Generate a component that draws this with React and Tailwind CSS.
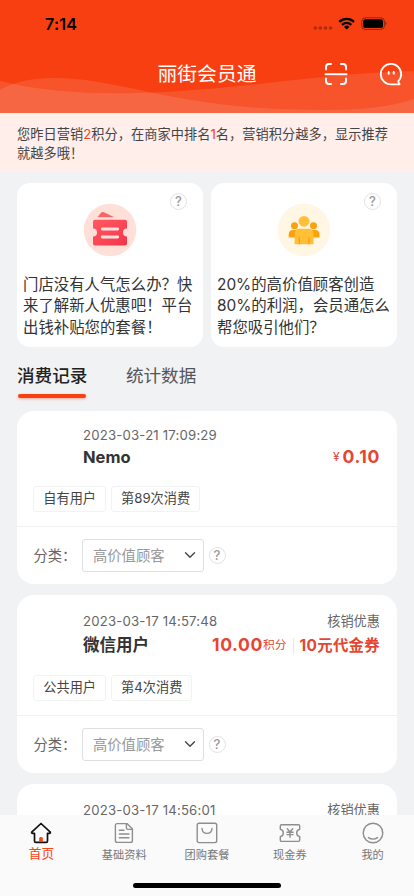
import { ChevronDown } from "lucide-react";

const promos = [
  {
    id: "newcomer",
    lines: ["门店没有人气怎么办？快", "来了解新人优惠吧！平台", "出钱补贴您的套餐！"],
    icon: <CouponIcon />,
  },
  {
    id: "member",
    lines: ["20%的高价值顾客创造", "80%的利润，会员通怎么", "帮您吸引他们？"],
    icon: <PeopleIcon />,
  },
];

const records = [
  { id: 1, time: "2023-03-21 17:09:29", name: "Nemo", price: "0.10", tags: ["自有用户", "第89次消费"] },
  {
    id: 2,
    time: "2023-03-17 14:57:48",
    name: "微信用户",
    points: "10.00",
    coupon: "10元代金券",
    tags: ["公共用户", "第4次消费"],
  },
];

const tabs = [
  { label: "首页", icon: <HomeIcon />, active: true },
  { label: "基础资料", icon: <DocIcon /> },
  { label: "团购套餐", icon: <BagIcon /> },
  { label: "现金券", icon: <TicketIcon /> },
  { label: "我的", icon: <FaceIcon /> },
];

function CouponIcon() {
  return (
    <svg width="54" height="54" viewBox="0 0 54 54">
      <defs>
        <linearGradient id="coupon" x1="0" y1="0" x2="1" y2="1">
          <stop offset="0" stopColor="#ff5a5f" />
          <stop offset="0.5" stopColor="#fd4757" />
          <stop offset="1" stopColor="#ee3548" />
        </linearGradient>
      </defs>
      <circle cx="27" cy="27" r="26.3" fill="#ffe0d9" />
      <path d="M14.5 14.2 18 9.8Q19.2 8.6 20.8 9.2L31.5 14.2Z" fill="#f4666a" />
      <path
        d="M12 16.8H42Q44 16.8 44 18.8V25.4A4 4 0 0 0 44 33.4V40.5Q44 42.5 42 42.5H12Q10 42.5 10 40.5V33.4A4 4 0 0 0 10 25.4V18.8Q10 16.8 12 16.8Z"
        fill="url(#coupon)"
      />
      <path d="M19.3 26H34.7M19.3 34H34.7" stroke="#ffe2dd" strokeWidth="2.8" strokeLinecap="round" />
    </svg>
  );
}

function PeopleIcon() {
  return (
    <svg width="54" height="54" viewBox="0 0 54 54">
      <circle cx="27" cy="27" r="26.3" fill="#fff6e3" />
      <g fill="#fba10d">
        <circle cx="17.5" cy="22.8" r="3.5" />
        <circle cx="36.5" cy="22.8" r="3.5" />
        <path d="M16 27H22V34.5H11.7V31.5Q11.7 27 16 27ZM38 27H32V34.5H42.5V31.5Q42.5 27 38 27Z" />
      </g>
      <circle cx="27" cy="18.3" r="5.4" fill="#ffc037" />
      <path d="M22.5 25.8H31.5Q36.5 25.8 36.5 31V41.3H17.6V31Q17.6 25.8 22.5 25.8Z" fill="#ffc037" />
      <path d="M22.3 34.5V41.3M32 34.5V41.3" stroke="#fba10d" strokeWidth="1.3" />
    </svg>
  );
}

function HomeIcon() {
  return (
    <svg width="22" height="22" viewBox="0 0 22 22" fill="none">
      <path
        d="M11 1.5 1.7 10.2Q1.4 11.3 2.6 11.3H4.5V19Q4.5 20.4 5.8 20.4H16.2Q17.5 20.4 17.5 19V11.3H19.4Q20.6 11.3 20.3 10.2Z"
        stroke="#111"
        strokeWidth="1.7"
        strokeLinejoin="round"
      />
      <path d="M9.2 20V16.4Q9.2 15 11 15T12.8 16.4V20Z" fill="#f94216" />
    </svg>
  );
}

function DocIcon() {
  return (
    <svg width="22" height="22" viewBox="0 0 22 22" fill="none" stroke="currentColor" strokeWidth="1.4" strokeLinejoin="round">
      <path d="M4.2 1.6H14L19.4 7V18.5Q19.4 20.4 17.5 20.4H4.2Q2.4 20.4 2.4 18.5V3.4Q2.4 1.6 4.2 1.6Z" />
      <path d="M13.4 1.8V6Q13.4 7.4 14.8 7.4H19.2M6.3 8.2H11M6.3 12H16M6.3 15.8H16" strokeLinecap="round" />
    </svg>
  );
}

function BagIcon() {
  return (
    <svg width="22" height="22" viewBox="0 0 22 22" fill="none" stroke="currentColor" strokeWidth="1.4" strokeLinecap="round">
      <rect x="1.2" y="1.3" width="19.5" height="19.3" rx="1.8" />
      <path d="M6 6.5C6.5 13 15.5 13 16 6.5" />
    </svg>
  );
}

function TicketIcon() {
  return (
    <svg width="22" height="22" viewBox="0 0 22 22" fill="none" stroke="currentColor" strokeWidth="1.4" strokeLinecap="round" strokeLinejoin="round">
      <path d="M2.5 2.7H19.5Q20.7 2.7 20.7 4V7.2Q17.7 8 17.7 11T20.7 14.8V18Q20.7 19.4 19.5 19.4H2.5Q1.3 19.4 1.3 18V14.8Q4.3 14 4.3 11T1.3 7.2V4Q1.3 2.7 2.5 2.7Z" />
      <path d="M8.3 6.8 11 10 13.7 6.8M7.9 10.2H14.1M7.9 12.6H14.1M11 10V15.2" />
    </svg>
  );
}

function FaceIcon() {
  return (
    <svg width="22" height="22" viewBox="0 0 22 22" fill="none" stroke="currentColor" strokeWidth="1.4" strokeLinecap="round">
      <circle cx="11" cy="11" r="9.8" />
      <path d="M6.4 15.6Q11 18.6 15.6 15.6" />
    </svg>
  );
}

function HelpMark() {
  return (
    <span className="flex size-[17px] shrink-0 items-center justify-center rounded-full border border-[#e2e2e2] text-[13px] leading-none font-medium text-[#999]">
      ?
    </span>
  );
}

function StatusBar() {
  return (
    <div className="flex h-[48px] items-start justify-between pt-[15px] pr-[27px] pl-[45px]">
      <span className="text-[16px] leading-[18px] font-semibold tracking-[0.2px] text-black">7:14</span>
      <svg width="74" height="18" viewBox="0 0 74 18">
        <g fill="#000" fillOpacity="0.3">
          <circle cx="2.3" cy="13" r="1.8" />
          <circle cx="7.3" cy="13" r="1.8" />
          <circle cx="12.5" cy="13" r="1.8" />
          <circle cx="17.6" cy="13" r="1.8" />
        </g>
        <g fill="none" stroke="#000" strokeWidth="2.3">
          <path d="M26.3 6.9A10.6 10.6 0 0 1 41 6.9" />
          <path d="M29 9.8A6.7 6.7 0 0 1 38.3 9.8" />
        </g>
        <path d="M33.7 14.6 31 11.9A3.9 3.9 0 0 1 36.4 11.9Z" />
        <rect x="48.8" y="2.8" width="22.6" height="11.6" rx="3.4" fill="none" stroke="#000" strokeOpacity="0.4" />
        <rect x="50.2" y="4.2" width="19.8" height="8.8" rx="2" />
        <path d="M72.4 6.6A2.4 2.4 0 0 1 72.4 10.6Z" fillOpacity="0.45" />
      </svg>
    </div>
  );
}

function Header() {
  return (
    <header className="relative h-[113px] shrink-0 bg-[#f73f11]">
      <svg className="absolute inset-0" width="414" height="113" viewBox="0 0 414 113">
        <path d="M0 81C45 92 90 94 135 93C245 90 310 74 414 71V113H0Z" fill="#fff" fillOpacity="0.11" />
        <path d="M0 90C30 72 80 77 125 87C190 101 240 110 320 110C365 110 390 107 414 99V113H0Z" fill="#fff" fillOpacity="0.11" />
      </svg>
      <div className="relative">
        <StatusBar />
        <div className="grid h-[52px] grid-cols-[1fr_auto_1fr] items-center">
          <span />
          <h1 className="text-[19.8px] leading-[26px] text-white">丽街会员通</h1>
          <div className="flex justify-end gap-[31px] pr-[11px] text-white">
            <svg width="24" height="24" viewBox="0 0 24 24" fill="none" stroke="currentColor" strokeWidth="2" strokeLinecap="round">
              <path d="M2 7.5V5Q2 2 5 2H7M17 2H19Q22 2 22 5V7.5M22 16.5V19Q22 22 19 22H17M7 22H5Q2 22 2 19V16.5M1.5 12.2H22.5" />
            </svg>
            <svg width="24" height="24" viewBox="0 0 24 24" fill="none" stroke="currentColor" strokeWidth="1.8" strokeLinejoin="round">
              <path d="M12 22.3A10.2 10.2 0 1 1 22.2 12Q22.2 16.2 19.3 19.2Q19.6 21 20.6 22.3Z" />
              <path d="M9.7 10V11.8M14.7 10V11.8" strokeWidth="2" strokeLinecap="round" />
            </svg>
          </div>
        </div>
      </div>
    </header>
  );
}

function Notice() {
  return (
    <div className="h-[59px] shrink-0 bg-[#ffeeea] px-[17px] pt-[11.5px] text-[13.2px] leading-[19px] tracking-[0.05px] whitespace-nowrap text-[#444]">
      <p>
        您昨日营销<span className="text-[#f94216]">2</span>积分，在商家中排名<span className="text-[#f94216]">1</span>
        名，营销积分越多，显示推荐
      </p>
      <p>就越多哦！</p>
    </div>
  );
}

function PromoCard({ promo }) {
  return (
    <div className="relative flex h-[164px] flex-1 flex-col rounded-[13px] bg-white pt-[20px] pl-[6px]">
      <div className="absolute top-[10.5px] right-[16px]">
        <HelpMark />
      </div>
      <div className="flex justify-center pr-[6px]">{promo.icon}</div>
      <div className="mt-[17.2px] text-[15.4px] leading-[21.4px] whitespace-nowrap text-[#333]">
        {promo.lines.map((line) => (
          <p key={line}>{line}</p>
        ))}
      </div>
    </div>
  );
}

function RecordCard({ record }) {
  return (
    <article className="shrink-0 rounded-[17px] bg-white">
      <div className={`pr-[17px] pl-[66px] ${record.coupon ? "h-[79.7px] pt-[17px]" : "h-[75px] pt-[15.5px]"}`}>
        <div className="flex h-[18px] items-center justify-between text-[13.2px] leading-[18px] text-[#666]">
          <span className="tracking-[0.18px]">{record.time}</span>
          {record.coupon ? <span>核销优惠</span> : null}
        </div>
        <div className={`flex h-[24px] items-center justify-between ${record.coupon ? "mt-[3.6px]" : "mt-[1px]"}`}>
          <span className="text-[16.5px] font-bold text-[#333]">{record.name}</span>
          {record.coupon ? (
            <div className="flex items-center text-[#e64532]">
              <span className="text-[17.6px] font-bold tracking-[0.6px]">{record.points}</span>
              <span className="text-[11.8px]">积分</span>
              <span className="mx-[6px] h-[16px] w-px bg-[#e8e8e8]" />
              <span className="text-[15.4px] font-bold tracking-[0.3px]">{record.coupon}</span>
            </div>
          ) : (
            <div className="flex items-center text-[#e64532]">
              <span className="mr-[3px] text-[12px]">¥</span>
              <span className="text-[17.6px] font-bold tracking-[0.6px]">{record.price}</span>
            </div>
          )}
        </div>
      </div>
      <div className="flex h-[41px] gap-[5px] border-b border-[#f1f1f2] pl-[16.3px]">
        {record.tags.map((tag) => (
          <span
            key={tag}
            className="flex h-[26px] items-center rounded-[3px] border border-[#f1f2f4] px-[9px] pt-px text-[13.2px] text-[#444]"
          >
            {tag}
          </span>
        ))}
      </div>
      <div className="flex h-[57.5px] items-center pl-[16.5px] text-[14.3px]">
        <span className="w-[48.5px] whitespace-nowrap text-[#666]">分类：</span>
        <button className="flex h-[33px] w-[121.5px] items-center justify-between rounded-[3px] border border-[#dedfe2] pr-[4px] pl-[10px] text-[#999]">
          高价值顾客
          <ChevronDown size={18} strokeWidth={1.8} className="text-[#444]" />
        </button>
        <span className="ml-[5px]">
          <HelpMark />
        </span>
      </div>
    </article>
  );
}

function TabBar() {
  return (
    <nav className="relative flex h-[81px] shrink-0 bg-[#fafafa] pt-[7px]">
      {tabs.map((tab) => (
        <div key={tab.label} className="flex flex-1 flex-col items-center text-[#8e8e8e]">
          {tab.icon}
          <span
            className={
              tab.active
                ? "mt-px text-[12.7px] leading-[18px] text-[#f94216]"
                : "mt-[2.5px] text-[11.2px] leading-[16px] text-[#777]"
            }
          >
            {tab.label}
          </span>
        </div>
      ))}
      <div className="absolute bottom-[8px] left-[133px] h-[5px] w-[148px] rounded-full bg-black" />
    </nav>
  );
}

export default function App() {
  return (
    <div className="flex h-[896px] w-[414px] flex-col overflow-hidden bg-[#f1f2f4] font-[Inter,'Noto_Sans_CJK_SC',sans-serif]">
      <Header />
      <Notice />
      <main className="flex min-h-0 flex-1 flex-col overflow-hidden px-[17px] pt-[10.5px]">
        <section className="flex shrink-0 gap-[8px]">
          {promos.map((promo) => (
            <PromoCard key={promo.id} promo={promo} />
          ))}
        </section>
        <div className="flex h-[64px] shrink-0 gap-[38.5px] pt-[16.5px] text-[17.6px] leading-[26px]">
          <div className="font-medium text-[#222]">
            消费记录
            <div className="mt-[5px] ml-[1px] h-[4px] w-[68px] rounded-full bg-[#f94012] shadow-[0_1px_3px_rgba(249,64,18,0.4)]" />
          </div>
          <div className="text-[#555]">统计数据</div>
        </div>
        <section className="flex flex-col gap-[11px]">
          {records.map((record) => (
            <RecordCard key={record.id} record={record} />
          ))}
          <article className="flex h-[60px] shrink-0 justify-between rounded-t-[17px] bg-white pt-[17px] pr-[17px] pl-[66px] text-[13.2px] leading-[18px] text-[#666]">
            <span className="tracking-[0.18px]">2023-03-17 14:56:01</span>
            <span>核销优惠</span>
          </article>
        </section>
      </main>
      <TabBar />
    </div>
  );
}
